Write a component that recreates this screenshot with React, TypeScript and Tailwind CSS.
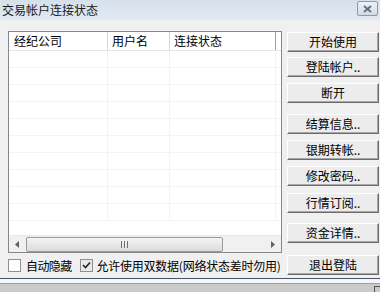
import React from 'react';

const font = { fontFamily: '"Noto Sans CJK SC", "Liberation Sans", sans-serif' };

const buttons: { label: string; top: number }[] = [
  { label: '开始使用', top: 1 },
  { label: '登陆帐户..', top: 5 },
  { label: '断开', top: 6 },
  { label: '结算信息..', top: 11 },
  { label: '银期转帐..', top: 6 },
  { label: '修改密码..', top: 6 },
  { label: '行情订阅..', top: 7 },
  { label: '资金详情..', top: 10 },
  { label: '退出登陆', top: 12 },
];

const WinButton = ({ label, mt }: { label: string; mt: number }) => (
  <div
    style={{ marginTop: mt }}
    className="h-[20px] w-[92px] flex items-center justify-center border border-t-white border-l-white border-b-[#6b6b6b] border-r-[#6b6b6b] bg-[#ececec] shadow-[inset_-1px_-1px_0_#a8a8a8] text-[12px] leading-none text-black"
  >
    {label}
  </div>
);

const Arrow = ({ dir }: { dir: 'l' | 'r' }) => (
  <div className="w-[17px] h-full flex items-center justify-center">
    <svg width="5" height="7" viewBox="0 0 5 7">
      {dir === 'l' ? <path d="M4 0 L0 3.5 L4 7 Z" fill="#606060" /> : <path d="M1 0 L5 3.5 L1 7 Z" fill="#606060" />}
    </svg>
  </div>
);

const CheckBox = ({ checked }: { checked?: boolean }) => (
  <div className={`w-[13px] h-[13px] border border-[#8e8f8f] flex items-center justify-center ${checked ? 'bg-[#e8e8e8]' : 'bg-white'}`}>
    {checked && (
      <svg width="9" height="9" viewBox="0 0 9 9">
        <path d="M1 4 L3.5 6.5 L8 1.5" stroke="#222" strokeWidth="1.6" fill="none" />
      </svg>
    )}
  </div>
);

export default function App() {
  const rows = Array.from({ length: 10 });
  return (
    <div className="w-[380px] h-[292px] overflow-hidden bg-[#f0f0f0] flex flex-col" style={font}>
      {/* title bar */}
      <div className="h-[20px] flex items-center justify-between bg-gradient-to-b from-[#d6e0ec] to-[#e2e9f2] pl-[2px] pr-[2px]">
        <span className="text-[12px] leading-none text-[#1a1a1a]">交易帐户连接状态</span>
        <div className="w-[21px] h-[15px] mt-[-3px] border border-[#8a99ab] rounded-[2px] bg-gradient-to-b from-[#eef2f6] to-[#d3dce6] flex items-center justify-center">
          <svg width="9" height="8" viewBox="0 0 9 8">
            <path d="M1 1 L8 7 M8 1 L1 7" stroke="#5d6b7c" strokeWidth="1.8" />
          </svg>
        </div>
      </div>

      <div className="flex pl-[8px] pt-[11px]">
        <div className="flex flex-col w-[274px]">
          {/* list view */}
          <div className="h-[222px] border border-[#828790] bg-white flex flex-col">
            <div className="h-[19px] flex border-b border-[#e5e5e5] text-[12px] leading-none text-black">
              <div className="w-[99px] flex items-center pl-[5px] border-r border-[#d5d5d5]">经纪公司</div>
              <div className="w-[62px] flex items-center pl-[4px] border-r border-[#d5d5d5]">用户名</div>
              <div className="w-[106px] flex items-center pl-[4px] border-r border-[#a0a0a0]">连接状态</div>
            </div>
            <div className="flex-1 relative overflow-hidden">
              {rows.map((_, i) => (
                <div key={i} className="h-[17px] flex border-b border-[#f3f3f3]">
                  <div className="w-[99px] border-r border-[#f3f3f3]" />
                  <div className="w-[62px] border-r border-[#f3f3f3]" />
                  <div className="w-[106px] border-r border-[#f3f3f3]" />
                </div>
              ))}
            </div>
            {/* horizontal scrollbar */}
            <div className="h-[17px] flex items-center bg-[#f0f0f0] border-t border-[#e8e8e8]">
              <Arrow dir="l" />
              <div className="flex-1 h-full flex items-center">
                <div className="w-[197px] h-[15px] rounded-[2px] border border-[#9a9a9a] bg-gradient-to-b from-[#f4f4f4] to-[#dcdcdc] flex items-center justify-center">
                  <svg width="7" height="7" viewBox="0 0 7 7">
                    <path d="M0.5 0 V7 M3.5 0 V7 M6.5 0 V7" stroke="#707070" strokeWidth="1" />
                  </svg>
                </div>
              </div>
              <Arrow dir="r" />
            </div>
          </div>

          {/* checkboxes */}
          <div className="flex items-center w-max whitespace-nowrap mt-[6px] text-[12px] leading-none text-black">
            <CheckBox />
            <span className="ml-[5px] tracking-[-0.6px]">自动隐藏</span>
            <div className="ml-[8px]">
              <CheckBox checked />
            </div>
            <span className="ml-[4px] tracking-[-0.25px]">允许使用双数据(网络状态差时勿用)</span>
          </div>
        </div>

        {/* button column */}
        <div className="flex flex-col ml-[5px]">
          {buttons.map((b) => (
            <WinButton key={b.label} label={b.label} mt={b.top} />
          ))}
        </div>
      </div>

      {/* footer frame */}
      <div className="mt-[auto] h-[14px] flex flex-col">
        <div className="h-px bg-[#47536b]" />
        <div className="h-[4px] bg-[#f6f6f6]" />
        <div className="flex-1 bg-[#cacaca] border-t border-[#9d9d9d] flex justify-end">
          <div className="w-[6px] mt-[2px] border-l border-t border-[#555]" />
        </div>
      </div>
    </div>
  );
}
